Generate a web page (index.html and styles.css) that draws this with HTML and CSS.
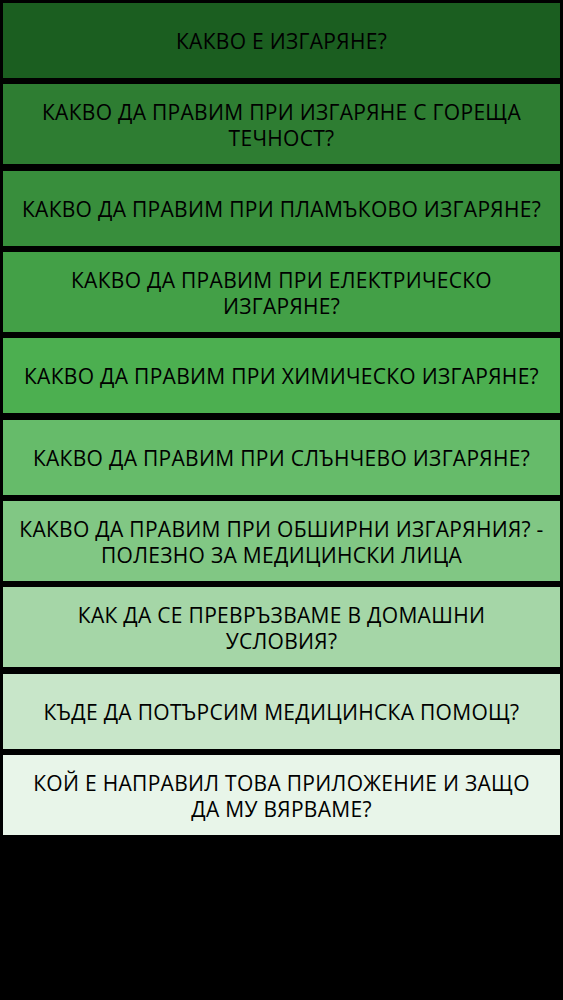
FILE: index.html
```html
<!DOCTYPE html>
<html lang="bg">
<head>
<meta charset="utf-8">
<title>Изгаряния</title>
<link rel="stylesheet" href="styles.css">
</head>
<body>
<nav class="menu">
  <a class="item c1" href="#">КАКВО Е ИЗГАРЯНЕ?</a>
  <a class="item c2 two" href="#">КАКВО ДА ПРАВИМ ПРИ ИЗГАРЯНЕ С ГОРЕЩА<br>ТЕЧНОСТ?</a>
  <a class="item c3" href="#">КАКВО ДА ПРАВИМ ПРИ ПЛАМЪКОВО ИЗГАРЯНЕ?</a>
  <a class="item c4 two" href="#">КАКВО ДА ПРАВИМ ПРИ ЕЛЕКТРИЧЕСКО<br>ИЗГАРЯНЕ?</a>
  <a class="item c5" href="#">КАКВО ДА ПРАВИМ ПРИ ХИМИЧЕСКО ИЗГАРЯНЕ?</a>
  <a class="item c6" href="#">КАКВО ДА ПРАВИМ ПРИ СЛЪНЧЕВО ИЗГАРЯНЕ?</a>
  <a class="item c7 two" href="#">КАКВО ДА ПРАВИМ ПРИ ОБШИРНИ ИЗГАРЯНИЯ? -<br>ПОЛЕЗНО ЗА МЕДИЦИНСКИ ЛИЦА</a>
  <a class="item c8 two" href="#">КАК ДА СЕ ПРЕВРЪЗВАМЕ В ДОМАШНИ<br>УСЛОВИЯ?</a>
  <a class="item c9" href="#">КЪДЕ ДА ПОТЪРСИМ МЕДИЦИНСКА ПОМОЩ?</a>
  <a class="item c10 two" href="#">КОЙ Е НАПРАВИЛ ТОВА ПРИЛОЖЕНИЕ И ЗАЩО<br>ДА МУ ВЯРВАМЕ?</a>
</nav>
</body>
</html>
```
FILE: styles.css
```css
html, body {
  margin: 0;
  padding: 0;
  background: #000;
  min-height: 100%;
}
body {
  font-family: "Open Sans", "Noto Sans", "DejaVu Sans", sans-serif;
}
.menu {
  display: flex;
  flex-direction: column;
  gap: 6.35px;
  padding: 3px 3px 0 3px;
}
.item {
  display: flex;
  align-items: center;
  justify-content: center;
  text-align: center;
  box-sizing: border-box;
  height: 75px;
  padding: 1px 8px 0 8px;
  color: #000;
  text-decoration: none;
  font-size: 21px;
  line-height: 26px;
  letter-spacing: 0.3px;
  white-space: nowrap;
}
.item.two { height: 80px; }
.c1 { background: #1b5e20; }
.c2 { background: #2e7d32; }
.c3 { background: #388e3c; }
.c4 { background: #43a047; }
.c5 { background: #4caf50; }
.c6 { background: #66bb6a; }
.c7 { background: #81c784; }
.c8 { background: #a5d6a7; }
.c9 { background: #c8e6c9; }
.c10 { background: #e8f5e9; }
```
